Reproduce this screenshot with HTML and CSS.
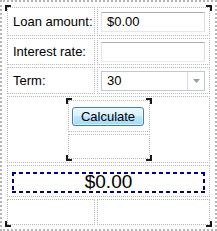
FILE: index.html
```html
<!DOCTYPE html>
<html>
<head>
    <meta charset="UTF-8">
    <title>Loan Calculator</title>
    <link rel="stylesheet" href="styles.css">
</head>
<body>
    <div class="frame">
        <div class="layout selected">
            <span class="corner tl"></span>
            <span class="corner tr"></span>
            <span class="corner bl"></span>
            <span class="corner br"></span>

            <div class="cell label">Loan amount:</div>
            <div class="cell field"><div class="textbox">$0.00</div></div>

            <div class="cell label">Interest rate:</div>
            <div class="cell field"><div class="textbox"></div></div>

            <div class="cell label">Term:</div>
            <div class="cell field">
                <div class="combo">
                    <span class="combo-text">30</span>
                    <span class="combo-btn">
                        <svg width="7" height="4" viewBox="0 0 7 4"><path d="M0 0H7L3.5 4Z" fill="#8f9fb8"/></svg>
                    </span>
                </div>
            </div>

            <div class="cell wide actions">
                <div class="stack selected">
                    <span class="corner tl"></span>
                    <span class="corner tr"></span>
                    <span class="corner bl"></span>
                    <span class="corner br"></span>
                    <div class="cell btn-cell"><button class="calc">Calculate</button></div>
                    <div class="cell"></div>
                </div>
            </div>

            <div class="cell wide result">
                <div class="result-box">$0.00</div>
            </div>

            <div class="cell"></div>
            <div class="cell"></div>
        </div>
    </div>
</body>
</html>
```

FILE: styles.css
```css
* {
    margin: 0;
    padding: 0;
    box-sizing: border-box;
}

body {
    font-family: 'Liberation Sans', Arial, sans-serif;
    font-size: 13px;
    color: #000;
    background: #fff;
}

.frame {
    width: 217px;
    height: 231px;
    border: 2px dotted #b4b4b4;
    padding: 4px 0 0 4px;
}

.layout {
    position: relative;
    width: 205px;
    height: 220px;
    display: grid;
    grid-template-columns: 90px 115px;
    grid-template-rows: 31px 29px 29px 69px 34px 28px;
}

.cell {
    margin: 1px;
    border: 1px dotted #b8b8b8;
}

.wide {
    grid-column: span 2;
}

.label {
    display: flex;
    align-items: center;
    padding-left: 5px;
}

.field {
    display: flex;
    align-items: center;
    padding: 0 4px 0 3px;
}

.textbox {
    flex: 1;
    height: 20px;
    border: 1px solid #abadb3;
    border-left-color: #e2e3ea;
    border-right-color: #dbdfe6;
    border-bottom-color: #e3e9ef;
    padding: 2px 5px;
    line-height: 14px;
}

.combo {
    flex: 1;
    height: 20px;
    display: flex;
    border: 1px solid #c3c8d0;
}

.combo-text {
    flex: 1;
    padding: 2px 5px;
    line-height: 14px;
}

.combo-btn {
    width: 17px;
    border-left: 1px solid #d5d9e0;
    display: flex;
    align-items: center;
    justify-content: center;
}

.actions {
    display: flex;
    align-items: center;
    justify-content: center;
}

.stack {
    position: relative;
    width: 84px;
    height: 61px;
    display: grid;
    grid-template-rows: 34px 27px;
}

.btn-cell {
    display: flex;
    align-items: center;
    justify-content: center;
    padding-right: 1px;
}

.calc {
    width: 72px;
    height: 19px;
    font-family: inherit;
    font-size: 13px;
    color: #000;
    border: 1px solid #3c7fb1;
    border-radius: 3px;
    background: linear-gradient(#eaf6fd 0%, #d9f0fc 50%, #bee6fd 50%, #a7d9f5 100%);
    box-shadow: inset 0 0 0 1px rgba(255, 255, 255, 0.6);
}

.result {
    padding: 6px 4px 0 4px;
}

.result-box {
    height: 21px;
    font-size: 19px;
    line-height: 20px;
    text-align: center;
    background:
        repeating-linear-gradient(90deg, #00008b 0 4px, transparent 4px 7px) top left / 100% 2px no-repeat,
        repeating-linear-gradient(90deg, #00008b 0 4px, transparent 4px 7px) bottom left / 100% 2px no-repeat,
        repeating-linear-gradient(180deg, #00008b 0 4px, transparent 4px 7px) top left / 2px 100% no-repeat,
        repeating-linear-gradient(180deg, #00008b 0 4px, transparent 4px 7px) top right / 2px 100% no-repeat;
}

/* selection brackets drawn by the designer */
.corner {
    position: absolute;
    width: 6px;
    height: 6px;
    border: 0 solid #1a1a1a;
}

.corner.tl { top: -1px; left: -1px; border-top-width: 2px; border-left-width: 2px; }
.corner.tr { top: -1px; right: -1px; border-top-width: 2px; border-right-width: 2px; }
.corner.bl { bottom: -1px; left: -1px; border-bottom-width: 2px; border-left-width: 2px; }
.corner.br { bottom: -1px; right: -1px; border-bottom-width: 2px; border-right-width: 2px; }
```
